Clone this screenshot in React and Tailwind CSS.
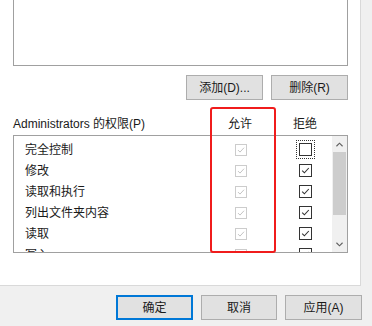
import React from 'react';

const font = { fontFamily: '"Liberation Sans", "Noto Sans CJK SC", sans-serif' };

const perms = ['完全控制', '修改', '读取和执行', '列出文件夹内容', '读取', '写入'];

function Check({ on, disabled, focus }) {
    const box = disabled
        ? 'w-[12px] h-[12px] border-[#cccccc]'
        : 'w-[13px] h-[13px] border-[#333333]';
    return (
        <div className={focus ? 'p-[2px] outline-1 outline-dotted outline-[#333] -outline-offset-0' : ''}>
            <div className={`${box} border bg-white flex items-center justify-center`}>
                {on && (
                    <svg viewBox="0 0 11 11" className="w-full h-full">
                        <path
                            d="M2.2 5.6 L4.4 7.8 L8.8 3"
                            fill="none"
                            stroke={disabled ? '#c4c4c4' : '#333333'}
                            strokeWidth="1.1"
                        />
                    </svg>
                )}
            </div>
        </div>
    );
}

function Btn({ children, primary, w = 'w-[77px]' }) {
    return (
        <div
            className={`${w} h-[25px] flex items-center justify-center text-[12px] text-[#1a1a1a] bg-[#e1e1e1] border ${primary ? 'border-2 border-[#0078d7]' : 'border-[#adadad]'}`}
        >
            {children}
        </div>
    );
}

export default function App() {
    return (
        <div className="relative w-[372px] h-[326px] bg-[#f0f0f0] overflow-hidden" style={font}>
            {/* tab page */}
            <div className="w-[361px] h-[286px] bg-white border-r border-b border-[#d9d9d9] pl-[13px] pr-[12px]">
                {/* group list (scrolled off top) */}
                <div className="h-[66px] border-x border-b border-[#a0a0a0]" />

                <div className="mt-[9px] flex justify-end gap-[8px]">
                    <Btn>添加(D)...</Btn>
                    <Btn>删除(R)</Btn>
                </div>

                <div className="mt-[16px] h-[16px] flex items-center text-[12px] text-[#1a1a1a] leading-[16px]">
                    <div className="w-[204px]">Administrators 的权限(P)</div>
                    <div className="w-[46px] text-center">允许</div>
                    <div className="w-[19px]" />
                    <div className="w-[46px] text-center">拒绝</div>
                </div>

                {/* permission list */}
                <div className="mt-[3px] h-[118px] border border-[#a0a0a0] flex overflow-hidden">
                    <div className="flex-1 pt-[3px] overflow-hidden">
                        {perms.map((p, i) => (
                            <div key={p} className="h-[21px] flex items-center text-[12px] text-[#1a1a1a]">
                                <div className="pl-[11px] w-[204px]">{p}</div>
                                <div className="w-[46px] flex justify-center">
                                    <Check on disabled />
                                </div>
                                <div className="w-[18px]" />
                                <div className="w-[46px] flex justify-center">
                                    <Check on={i > 0} focus={i === 0} />
                                </div>
                            </div>
                        ))}
                    </div>
                    {/* scrollbar */}
                    <div className="w-[15px] bg-[#f0f0f0] flex flex-col items-center">
                        <div className="h-[16px] flex items-center justify-center">
                            <svg viewBox="0 0 8 5" className="w-[7px] h-[5px]">
                                <path d="M0.5 4.5 L4 1 L7.5 4.5" fill="none" stroke="#606060" strokeWidth="1.3" />
                            </svg>
                        </div>
                        <div className="w-[13px] h-[63px] bg-[#cdcdcd]" />
                        <div className="flex-1" />
                        <div className="h-[16px] flex items-center justify-center">
                            <svg viewBox="0 0 8 5" className="w-[7px] h-[5px]">
                                <path d="M0.5 0.5 L4 4 L7.5 0.5" fill="none" stroke="#606060" strokeWidth="1.3" />
                            </svg>
                        </div>
                    </div>
                </div>
            </div>

            <div className="mt-[9px] pr-[10px] flex justify-end gap-[8px]">
                <Btn primary>确定</Btn>
                <Btn w="w-[76px]">取消</Btn>
                <Btn>应用(A)</Btn>
            </div>

            {/* red annotation */}
            <div className="absolute left-[210px] top-[107px] w-[66px] h-[146px] border-2 border-[#f01c1c] rounded-[3px]" />
        </div>
    );
}
